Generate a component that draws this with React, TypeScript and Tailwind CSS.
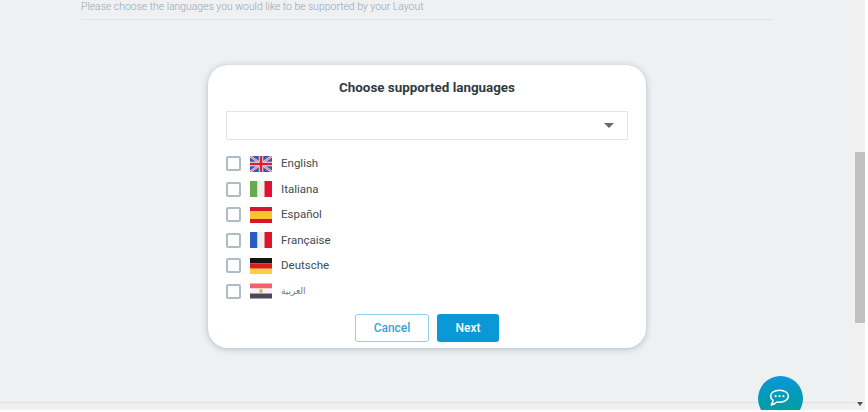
import React from 'react';

const FlagUK = () => (
  <svg width="22" height="16" viewBox="0 0 22 16" className="shrink-0">
    <rect width="22" height="16" fill="#2f5bb5" />
    <path d="M0 0L22 16M22 0L0 16" stroke="#f3d9de" strokeWidth="2.4" />
    <path d="M0 0L22 16M22 0L0 16" stroke="#e0525f" strokeWidth="0.9" />
    <path d="M11 0V16M0 8H22" stroke="#f7eef0" strokeWidth="4.4" />
    <path d="M11 0V16M0 8H22" stroke="#dc1f38" strokeWidth="2.6" />
  </svg>
);

const FlagIT = () => (
  <svg width="22" height="16" viewBox="0 0 22 16" className="shrink-0">
    <rect width="7.5" height="16" fill="#6aa84f" />
    <rect x="7.5" width="7" height="16" fill="#eef1ee" />
    <rect x="14.5" width="7.5" height="16" fill="#e2112f" />
  </svg>
);

const FlagES = () => (
  <svg width="22" height="16" viewBox="0 0 22 16" className="shrink-0">
    <rect width="22" height="16" fill="#d8152b" />
    <rect y="4" width="22" height="8" fill="#f8c52e" />
  </svg>
);

const FlagFR = () => (
  <svg width="22" height="16" viewBox="0 0 22 16" className="shrink-0">
    <rect width="7.5" height="16" fill="#2a5cc4" />
    <rect x="7.5" width="7" height="16" fill="#eef1f3" />
    <rect x="14.5" width="7.5" height="16" fill="#e2112f" />
  </svg>
);

const FlagDE = () => (
  <svg width="22" height="16" viewBox="0 0 22 16" className="shrink-0">
    <rect width="22" height="5.3" fill="#141414" />
    <rect y="5.3" width="22" height="5.4" fill="#dc1c1c" />
    <rect y="10.7" width="22" height="5.3" fill="#fbce3c" />
  </svg>
);

const FlagEG = () => (
  <svg width="22" height="16" viewBox="0 0 22 16" className="shrink-0">
    <rect y="0.5" width="22" height="5" fill="#f4606b" />
    <rect y="5.5" width="22" height="5" fill="#f3f3f3" />
    <rect y="10.5" width="22" height="5" fill="#4a4a57" />
    <rect x="9.5" y="6" width="3" height="4" rx="1" fill="#d8b75a" />
  </svg>
);

const ChatIcon = () => (
  <svg width="22" height="18" viewBox="0 0 22 18" fill="none" className="mr-[3px] shrink-0">
    <path
      d="M11.5 1.2C6.5 1.2 2.6 3.7 2.600 7.1c0 1.700 1 3.200 2.500 4.200-.1 1.500-.9 3.200-1.800 4.600 2.200-.4 4.200-1.600 5.600-2.900 .9.2 1.700.2 2.600.2 5 0 8.900-2.700 8.900-6.100s-3.900-5.900-8.900-5.900z"
      stroke="white"
      strokeWidth="1.6"
      strokeLinejoin="round"
    />
    <circle cx="7.6" cy="7.2" r="1.1" fill="white" />
    <circle cx="11.5" cy="7.2" r="1.1" fill="white" />
    <circle cx="15.4" cy="7.2" r="1.1" fill="white" />
  </svg>
);

const languages = [
  { name: 'English', flag: <FlagUK /> },
  { name: 'Italiana', flag: <FlagIT /> },
  { name: 'Español', flag: <FlagES /> },
  { name: 'Française', flag: <FlagFR /> },
  { name: 'Deutsche', flag: <FlagDE /> },
  { name: 'العربية', flag: <FlagEG /> },
];

export default function App() {
  return (
    <div className="h-[412px] w-[868px] overflow-hidden bg-white pr-[3px] pb-[2px] font-['Roboto',sans-serif]">
      <div className="flex h-[410px] overflow-hidden bg-[#eef0f2]">
        <div className="relative flex min-w-0 flex-1 flex-col">
          <div className="mx-[81px] w-[692px] border-b border-[#e1e4e6] pb-[6px]">
            <p className="text-[10.4px] leading-[13px] font-light text-[#97a6af]">
              Please choose the languages you would like to be supported by your Layout
            </p>
          </div>

          <div className="mt-[45px] ml-[208px] flex h-[283px] w-[438px] flex-col rounded-[20px] bg-white px-[18px] shadow-[0_1px_6px_rgba(100,125,140,0.45)]">
            <h2 className="mt-[14px] text-center text-[13.4px] leading-[17px] font-bold text-[#2f3a42]">
              Choose supported languages
            </h2>

            <div className="mt-[15px] flex h-[29px] items-center justify-end border border-[#dfe6ea] pr-[13px]">
              <span className="h-0 w-0 border-x-[5px] border-t-[5px] border-x-transparent border-t-[#666a6d]" />
            </div>

            <ul className="mt-[11px] flex flex-col">
              {languages.map((lang) => (
                <li key={lang.name} className="flex h-[25.5px] items-center">
                  <span className="h-[15px] w-[15px] shrink-0 rounded-[2px] border-2 border-[#aebcc5] bg-white" />
                  <span className="ml-[9px] flex">{lang.flag}</span>
                  <span
                    className={
                      lang.name === 'العربية'
                        ? "ml-[9px] font-['DejaVu_Sans',sans-serif] text-[9px] text-[#6d777e]"
                        : 'ml-[9px] text-[11.5px] text-[#414b52]'
                    }
                  >
                    {lang.name}
                  </span>
                </li>
              ))}
            </ul>

            <div className="mt-[10px] flex justify-center gap-[8px]">
              <button className="h-[28px] w-[74px] rounded-[3px] border border-[#8fd0ee] bg-white text-[12px] font-medium text-[#3ba3dc]">
                Cancel
              </button>
              <button className="h-[28px] w-[62px] rounded-[3px] bg-[#0b98d6] text-[12px] font-medium text-white">
                Next
              </button>
            </div>
          </div>

          <div className="mt-auto mb-[7px] border-t border-[#dfe2e4]" />

          <div className="absolute top-[376px] left-[758px] flex h-[45px] w-[45px] items-center justify-center rounded-full bg-gradient-to-b from-[#0d96d8] to-[#0a9f8e] pb-[2px]">
            <ChatIcon />
          </div>
        </div>

        <div className="flex w-[10px] shrink-0 flex-col bg-[#f1f1f1]">
          <div className="mt-[152px] h-[171px] bg-[#c1c1c1]" />
          <span className="mt-[79px] ml-[1.5px] h-0 w-0 border-x-[3.5px] border-t-[4px] border-x-transparent border-t-[#505050]" />
        </div>
      </div>
    </div>
  );
}
